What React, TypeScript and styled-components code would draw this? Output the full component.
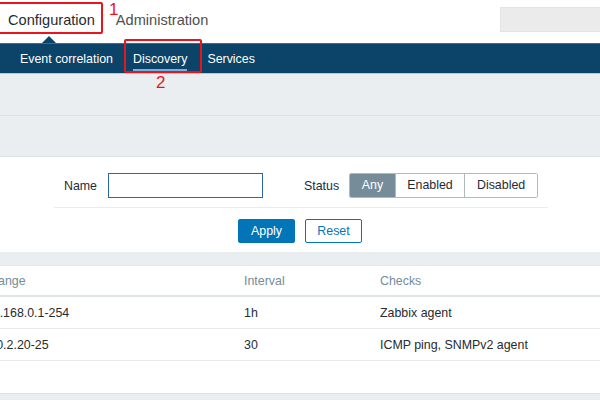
import React from 'react';
import styled, { createGlobalStyle } from 'styled-components';

const Global = createGlobalStyle`
  html, body { margin: 0; padding: 0; background: #ffffff; }
  body {
    font-family: "Liberation Sans", Arial, sans-serif;
    font-size: 12.4px;
    color: #1f2c33;
  }
  * { box-sizing: border-box; }
`;

const Page = styled.div`
  position: relative;
  width: 600px;
  height: 400px;
  overflow: hidden;
  background: #ebeef0;
  display: flex;
  flex-direction: column;
`;

const Header = styled.header`
  height: 43px;
  flex-shrink: 0;
  background: #ffffff;
  display: flex;
  align-items: flex-start;
  padding-left: 8px;
`;

const TopTab = styled.div<{ $active?: boolean }>`
  position: relative;
  height: 43px;
  padding-top: 12px;
  margin-right: 21px;
  font-size: 14.6px;
  line-height: 17px;
  color: ${(p) => (p.$active ? '#1f2c33' : '#4f4f4f')};
`;

const Caret = styled.span`
  position: absolute;
  left: 50%;
  bottom: 0;
  transform: translateX(-50%);
  margin-left: -2px;
  width: 0;
  height: 0;
  border-left: 7px solid transparent;
  border-right: 7px solid transparent;
  border-bottom: 7px solid #0b4468;
`;

const SearchBox = styled.div`
  margin-left: auto;
  margin-top: 7px;
  width: 100px;
  height: 25px;
  background: #ebebeb;
  border: 1px solid #e4e4e4;
  border-right: none;
`;

const Nav = styled.nav`
  height: 31px;
  flex-shrink: 0;
  background: #0b4468;
  border-top: 1px solid #45698a;
  border-bottom: 1px solid #b9c8d2;
  display: flex;
  padding-left: 10px;
`;

const NavItem = styled.div<{ $active?: boolean }>`
  position: relative;
  padding: 1px 10px 0;
  line-height: 28px;
  font-size: 12.4px;
  color: #ffffff;

  &::after {
    content: '';
    display: ${(p) => (p.$active ? 'block' : 'none')};
    position: absolute;
    left: 10px;
    right: 10px;
    bottom: 2px;
    height: 2px;
    background: #73b3e0;
  }
`;

const Band = styled.div<{ $h: number }>`
  height: ${(p) => p.$h}px;
  flex-shrink: 0;
  background: #ebeef0;
  border-bottom: 1px solid #dde2e5;
`;

const Filter = styled.section`
  background: #ffffff;
  padding: 16px 0 9px;
  flex-shrink: 0;
`;

const FormRow = styled.div`
  display: flex;
  align-items: center;
  margin: 0 52px 0 54px;
  padding-bottom: 9px;
  border-bottom: 1px solid #e9edef;
`;

const Label = styled.label<{ $w?: number; $ml?: number }>`
  width: ${(p) => (p.$w ? `${p.$w}px` : 'auto')};
  margin-left: ${(p) => p.$ml ?? 0}px;
  margin-right: 10px;
  text-align: right;
  color: #1f2c33;
  font-size: 12.4px;
`;

const TextInput = styled.input`
  width: 155px;
  height: 25px;
  margin-left: 1px;
  border: 1px solid #2a6aa2;
  background: #ffffff;
  outline: none;
  font-family: inherit;
  font-size: 12.4px;
  padding: 0 5px;
`;

const Segmented = styled.div`
  display: flex;
  height: 25px;
  border: 1px solid #acbbc2;
  border-radius: 2px;
  overflow: hidden;
`;

const Segment = styled.div<{ $on?: boolean }>`
  padding: 0 11.6px;
  line-height: 23px;
  font-size: 12.4px;
  background: ${(p) => (p.$on ? '#768d99' : '#ffffff')};
  color: ${(p) => (p.$on ? '#ffffff' : '#1f2c33')};
  & + & { border-left: 1px solid #acbbc2; }
`;

const Buttons = styled.div`
  display: flex;
  justify-content: center;
  gap: 10px;
  margin-top: 11px;
`;

const Button = styled.button<{ $primary?: boolean }>`
  width: 57px;
  height: 24px;
  border-radius: 2px;
  border: 1px solid #0275b8;
  background: ${(p) => (p.$primary ? '#0275b8' : '#ffffff')};
  color: ${(p) => (p.$primary ? '#ffffff' : '#0275b8')};
  font-family: inherit;
  font-size: 12.4px;
  padding: 0;
`;

const Gap = styled.div`
  height: 13px;
  flex-shrink: 0;
  background: #ebeef0;
`;

const TableCard = styled.section`
  background: #ffffff;
  height: 129px;
  flex-shrink: 0;
  border-top: 1px solid #e4e8eb;
  border-bottom: 1px solid #dde2e5;
  overflow: hidden;
`;

const TableInner = styled.div`
  margin-left: -21px;
`;

const Row = styled.div<{ $head?: boolean }>`
  display: grid;
  grid-template-columns: 265px 136px 1fr;
  align-items: center;
  height: ${(p) => (p.$head ? '31px' : '32px')};
  border-bottom: ${(p) => (p.$head ? '2px solid #dfe4e7' : '1px solid #e6eaec')};
  color: ${(p) => (p.$head ? '#768d99' : '#1f2c33')};
  font-size: 12.4px;
  white-space: nowrap;
`;

const Cell = styled.div``;

const RedBox = styled.div<{ $l: number; $t: number; $w: number; $h: number }>`
  position: absolute;
  left: ${(p) => p.$l}px;
  top: ${(p) => p.$t}px;
  width: ${(p) => p.$w}px;
  height: ${(p) => p.$h}px;
  border: 2px solid #e8151d;
  border-radius: 2px;
  pointer-events: none;
`;

const RedNum = styled.span<{ $l: number; $t: number }>`
  position: absolute;
  left: ${(p) => p.$l}px;
  top: ${(p) => p.$t}px;
  font-size: 17px;
  line-height: 17px;
  color: #e8151d;
`;

const rows = [
  { range: '192.168.0.1-254', interval: '1h', checks: 'Zabbix agent' },
  { range: '10.0.2.20-25', interval: '30', checks: 'ICMP ping, SNMPv2 agent' },
];

export default function App() {
  return (
    <>
      <Global />
      <Page>
        <Header>
          <TopTab $active>
            Configuration
            <Caret />
          </TopTab>
          <TopTab>Administration</TopTab>
          <SearchBox />
        </Header>
        <Nav>
          <NavItem>Event correlation</NavItem>
          <NavItem $active>Discovery</NavItem>
          <NavItem>Services</NavItem>
        </Nav>
        <Band $h={42} />
        <Band $h={41} />
        <Filter>
          <FormRow>
            <Label $w={43}>Name</Label>
            <TextInput />
            <Label $ml={41}>Status</Label>
            <Segmented>
              <Segment $on>Any</Segment>
              <Segment>Enabled</Segment>
              <Segment>Disabled</Segment>
            </Segmented>
          </FormRow>
          <Buttons>
            <Button $primary>Apply</Button>
            <Button>Reset</Button>
          </Buttons>
        </Filter>
        <Gap />
        <TableCard>
          <TableInner>
            <Row $head>
              <Cell>IP range</Cell>
              <Cell>Interval</Cell>
              <Cell>Checks</Cell>
            </Row>
            {rows.map((r) => (
              <Row key={r.range}>
                <Cell>{r.range}</Cell>
                <Cell>{r.interval}</Cell>
                <Cell>{r.checks}</Cell>
              </Row>
            ))}
          </TableInner>
        </TableCard>
        <RedBox $l={-4} $t={2} $w={107} $h={32} />
        <RedNum $l={109} $t={1}>1</RedNum>
        <RedBox $l={124} $t={39} $w={78} $h={34} />
        <RedNum $l={156} $t={74}>2</RedNum>
      </Page>
    </>
  );
}
